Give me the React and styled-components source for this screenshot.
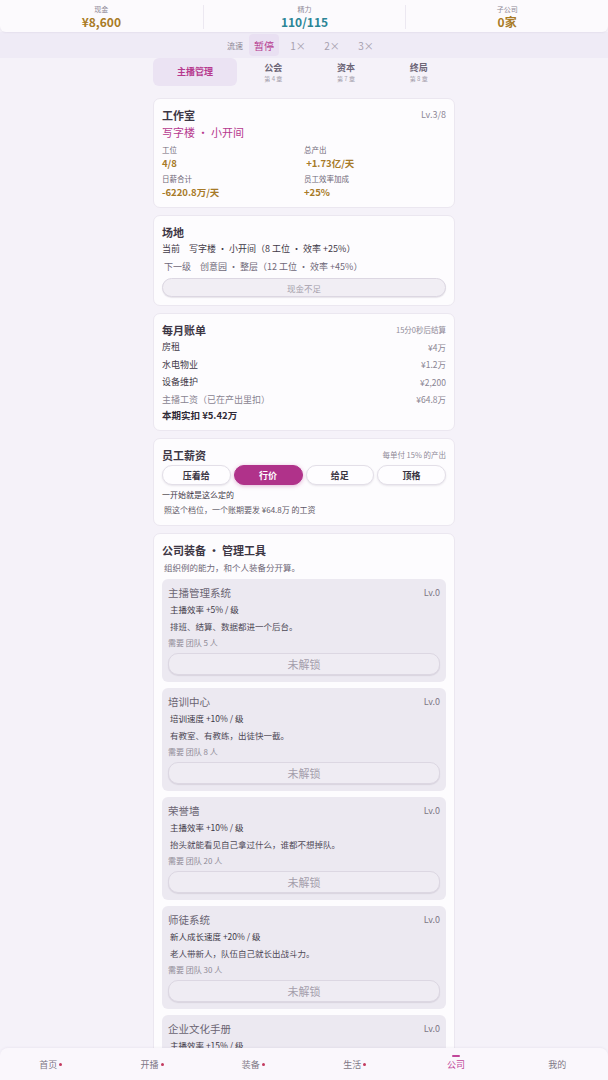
import React from 'react';
import styled, { createGlobalStyle } from 'styled-components';

const GlobalStyle = createGlobalStyle`
  html, body {
    margin: 0;
    padding: 0;
    background: #f5f2f9;
    font-family: "Noto Sans CJK SC", "Noto Sans", sans-serif;
  }
  * { box-sizing: border-box; }
`

const Shell = styled.div`
  height: 100vh;
  display: flex;
  flex-direction: column;
  overflow: hidden;
  background: #f5f2f9;
`

const StatBar = styled.div`
  height: 32px;
  display: grid;
  grid-template-columns: repeat(3, 1fr);
  background: #fcfafd;
  border-radius: 0 0 6px 6px;
  box-shadow: 0 1px 2px rgba(80, 60, 110, 0.06);
  position: relative;
  z-index: 1;
`

const Stat = styled.div`
  display: flex;
  flex-direction: column;
  align-items: center;
  justify-content: center;
  border-left: ${p => (p.$first ? 'none' : '1px solid #ece8f1')};
  margin: 5px 0;
`

const StatLabel = styled.div`
  font-size: 7px;
  line-height: 9px;
  color: #8d8795;
`

const StatValue = styled.div`
  font-size: 12px;
  line-height: 15px;
  font-weight: 700;
  color: ${p => p.$color};
`

const SpeedBar = styled.div`
  height: 26px;
  background: #efebf6;
  display: flex;
  align-items: center;
  justify-content: center;
  gap: 4px;
`

const SpeedLabel = styled.span`
  font-size: 8px;
  color: #8d8795;
  margin-right: 2px;
`

const SpeedBtn = styled.span`
  width: 30px;
  height: 22px;
  display: flex;
  align-items: center;
  justify-content: center;
  font-size: 10px;
  border-radius: 4px;
  color: ${p => (p.$active ? '#b6398e' : '#a6a0ae')};
  background: ${p => (p.$active ? '#e9e0f2' : 'transparent')};
`

const Scroll = styled.div`
  flex: 1;
  overflow: hidden;
`

const Column = styled.div`
  width: 302px;
  margin: 0 auto;
  display: flex;
  flex-direction: column;
  gap: 7px;
`

const Tabs = styled.div`
  display: grid;
  grid-template-columns: 84px repeat(3, 1fr);
  height: 28px;
  margin-bottom: 5px;
`

const Tab = styled.div`
  display: flex;
  flex-direction: column;
  align-items: center;
  justify-content: center;
  border-radius: 6px;
  background: ${p => (p.$active ? '#ebe3f3' : 'transparent')};
`

const TabName = styled.div`
  font-size: 9px;
  line-height: 12px;
  font-weight: 700;
  color: ${p => (p.$active ? '#b6398e' : '#6c6576')};
`

const TabSub = styled.div`
  font-size: 6px;
  line-height: 9px;
  color: #a39dab;
`

const Card = styled.div`
  background: #fdfcfe;
  border: 1px solid #ebe7f0;
  border-radius: 7px;
  padding: 7px 8px 8px;
`

const CardHead = styled.div`
  display: flex;
  justify-content: space-between;
  align-items: center;
  height: 17px;
`

const CardTitle = styled.div`
  font-size: 11px;
  font-weight: 700;
  color: #3d3745;
`

const HeadNote = styled.div`
  font-size: ${p => (p.$small ? '7.5px' : '9px')};
  color: #8f8997;
`

const Accent = styled.div`
  font-size: 11px;
  line-height: 18px;
  color: #b6398e;
`

const InfoGrid = styled.div`
  display: grid;
  grid-template-columns: 142px 1fr;
  row-gap: 3px;
  margin-top: 3px;
`

const InfoCell = styled.div`
  display: flex;
  flex-direction: column;
`

const InfoLabel = styled.div`
  font-size: 7.5px;
  line-height: 12px;
  color: #6f6878;
`

const InfoValue = styled.div`
  font-size: 9.5px;
  line-height: 14px;
  font-weight: 700;
  color: #a77a28;
`

const Line = styled.div`
  font-size: ${p => p.$size || '9px'};
  line-height: ${p => p.$lh || '18px'};
  color: ${p => p.$color || '#3f3947'};
  padding-left: ${p => p.$indent || '0'};
  white-space: nowrap;
`

const Gap = styled.span`
  display: inline-block;
  width: ${p => p.$w || '8px'};
`

const WideButton = styled.div`
  height: ${p => p.$h || '19px'};
  border-radius: 10px;
  border: 1px solid #dcd7e2;
  background: ${p => p.$bg || '#f1eef4'};
  box-shadow: 0 1px 1px rgba(70, 60, 90, 0.12);
  display: flex;
  align-items: center;
  justify-content: center;
  font-size: ${p => p.$fs || '8.5px'};
  color: #a49eab;
  margin-top: ${p => p.$mt || '2px'};
`

const BillRow = styled.div`
  display: flex;
  justify-content: space-between;
  align-items: center;
  height: 17.5px;
  font-size: 9px;
  color: ${p => (p.$muted ? '#8a8492' : '#3f3947')};
`

const BillValue = styled.span`
  font-size: 8.5px;
  color: #8a8492;
`

const Total = styled.div`
  font-size: 9.5px;
  font-weight: 700;
  color: #2f2a36;
  height: 14px;
  display: flex;
  align-items: center;
`

const Segments = styled.div`
  display: grid;
  grid-template-columns: repeat(4, 1fr);
  gap: 3px;
  margin: 2px 0 2px;
`

const Segment = styled.div`
  height: 20px;
  border-radius: 10px;
  display: flex;
  align-items: center;
  justify-content: center;
  font-size: 9px;
  font-weight: 700;
  color: ${p => (p.$active ? '#ffffff' : '#3a3441')};
  background: ${p => (p.$active ? '#b0328a' : '#fefdff')};
  border: 1px solid ${p => (p.$active ? '#b0328a' : '#e3dfe8')};
  box-shadow: ${p => (p.$active ? '0 1px 4px rgba(176, 50, 138, 0.35)' : '0 1px 2px rgba(70, 60, 90, 0.12)')};
`

const ToolList = styled.div`
  display: flex;
  flex-direction: column;
  gap: 6px;
  margin-top: 2px;
`

const SubCard = styled.div`
  background: #ece9f1;
  border-radius: 6px;
  padding: 4px 6px 7px;
`

const SubHead = styled.div`
  display: flex;
  justify-content: space-between;
  align-items: center;
  height: 18px;
  font-size: 10.5px;
  color: #6a6472;
`

const SubLv = styled.span`
  font-size: 9px;
  color: #7d7785;
`

const NavBar = styled.div`
  height: 32px;
  display: grid;
  grid-template-columns: repeat(6, 1fr);
  background: #faf7fc;
  border-radius: 8px 8px 0 0;
  box-shadow: 0 -1px 2px rgba(80, 60, 110, 0.05);
`

const NavItem = styled.div`
  display: flex;
  align-items: center;
  justify-content: center;
  font-size: 9px;
  color: ${p => (p.$active ? '#c1479a' : '#7e7886')};
  position: relative;
`

const NavMark = styled.span`
  position: absolute;
  top: 7px;
  left: 50%;
  width: 8px;
  height: 1.5px;
  margin-left: -4px;
  background: #c1479a;
  border-radius: 1px;
`

const Dot = styled.span`
  width: 3px;
  height: 3px;
  border-radius: 50%;
  background: #c33a5f;
  margin-left: 2px;
`

const tools = [
  ['主播管理系统', '主播效率 +5% / 级', '排班、结算、数据都进一个后台。', '需要 团队 5 人'],
  ['培训中心', '培训速度 +10% / 级', '有教室、有教练，出徒快一截。', '需要 团队 8 人'],
  ['荣誉墙', '主播效率 +10% / 级', '抬头就能看见自己拿过什么，谁都不想掉队。', '需要 团队 20 人'],
  ['师徒系统', '新人成长速度 +20% / 级', '老人带新人，队伍自己就长出战斗力。', '需要 团队 30 人'],
  ['企业文化手册', '主播效率 +15% / 级', '价值观写进墙上，也写进每个人心里。', '需要 团队 40 人'],
];

const navs = [
  ['首页', true], ['开播', true], ['装备', true], ['生活', true], ['公司', false, true], ['我的', false],
];

export default function App() {
  return (
    <Shell>
      <GlobalStyle />
      <StatBar>
        <Stat $first>
          <StatLabel>现金</StatLabel>
          <StatValue $color="#a97b26">¥8,600</StatValue>
        </Stat>
        <Stat>
          <StatLabel>精力</StatLabel>
          <StatValue $color="#2b8596">110/115</StatValue>
        </Stat>
        <Stat>
          <StatLabel>子公司</StatLabel>
          <StatValue $color="#a97b26">0家</StatValue>
        </Stat>
      </StatBar>
      <SpeedBar>
        <SpeedLabel>流速</SpeedLabel>
        <SpeedBtn $active>暂停</SpeedBtn>
        <SpeedBtn>1×</SpeedBtn>
        <SpeedBtn>2×</SpeedBtn>
        <SpeedBtn>3×</SpeedBtn>
      </SpeedBar>
      <Scroll>
        <Column>
          <Tabs>
            <Tab $active><TabName $active>主播管理</TabName></Tab>
            <Tab><TabName>公会</TabName><TabSub>第 4 章</TabSub></Tab>
            <Tab><TabName>资本</TabName><TabSub>第 7 章</TabSub></Tab>
            <Tab><TabName>终局</TabName><TabSub>第 8 章</TabSub></Tab>
          </Tabs>

          <Card>
            <CardHead>
              <CardTitle>工作室</CardTitle>
              <HeadNote>Lv.3/8</HeadNote>
            </CardHead>
            <Accent>写字楼 · 小开间</Accent>
            <InfoGrid>
              <InfoCell><InfoLabel>工位</InfoLabel><InfoValue>4/8</InfoValue></InfoCell>
              <InfoCell><InfoLabel>总产出</InfoLabel><InfoValue>&nbsp;+1.73亿/天</InfoValue></InfoCell>
              <InfoCell><InfoLabel>日薪合计</InfoLabel><InfoValue>-6220.8万/天</InfoValue></InfoCell>
              <InfoCell><InfoLabel>员工效率加成</InfoLabel><InfoValue>+25%</InfoValue></InfoCell>
            </InfoGrid>
          </Card>

          <Card>
            <CardHead><CardTitle>场地</CardTitle></CardHead>
            <Line>当前<Gap $w="9px" />写字楼 · 小开间（8 工位 · 效率 +25%）</Line>
            <Line $color="#6f6878" $indent="2px">下一级<Gap $w="9px" />创意园 · 整层（12 工位 · 效率 +45%）</Line>
            <WideButton>现金不足</WideButton>
          </Card>

          <Card>
            <CardHead>
              <CardTitle>每月账单</CardTitle>
              <HeadNote $small>15分0秒后结算</HeadNote>
            </CardHead>
            <BillRow>房租<BillValue>¥4万</BillValue></BillRow>
            <BillRow>水电物业<BillValue>¥1.2万</BillValue></BillRow>
            <BillRow>设备维护<BillValue>¥2,200</BillValue></BillRow>
            <BillRow $muted>主播工资（已在产出里扣）<BillValue>¥64.8万</BillValue></BillRow>
            <Total>本期实扣 ¥5.42万</Total>
          </Card>

          <Card>
            <CardHead>
              <CardTitle>员工薪资</CardTitle>
              <HeadNote $small>每单付 15% 的产出</HeadNote>
            </CardHead>
            <Segments>
              <Segment>压着给</Segment>
              <Segment $active>行价</Segment>
              <Segment>给足</Segment>
              <Segment>顶格</Segment>
            </Segments>
            <Line $size="8px" $lh="15px">一开始就是这么定的</Line>
            <Line $size="8px" $lh="15px" $color="#5e5866" $indent="2px">照这个档位，一个账期要发 ¥64.8万 的工资</Line>
          </Card>

          <Card>
            <CardHead><CardTitle>公司装备 · 管理工具</CardTitle></CardHead>
            <Line $size="8.5px" $lh="19px" $color="#6f6878" $indent="2px">组织例的能力，和个人装备分开算。</Line>
            <ToolList>
              {tools.map(t => (
                <SubCard key={t[0]}>
                  <SubHead>{t[0]}<SubLv>Lv.0</SubLv></SubHead>
                  <Line $size="8.5px" $lh="17px" $indent="2px">{t[1]}</Line>
                  <Line $size="8.5px" $lh="17px" $color="#4f4957" $indent="2px">{t[2]}</Line>
                  <Line $size="8px" $lh="15px" $color="#8f8997">{t[3]}</Line>
                  <WideButton $h="22px" $fs="11px" $bg="#efecf3" $mt="3px">未解锁</WideButton>
                </SubCard>
              ))}
            </ToolList>
          </Card>
        </Column>
      </Scroll>
      <NavBar>
        {navs.map(([name, dot, active]) => (
          <NavItem key={name} $active={active}>
            {active && <NavMark />}
            {name}
            {dot && <Dot />}
          </NavItem>
        ))}
      </NavBar>
    </Shell>
  );
}
